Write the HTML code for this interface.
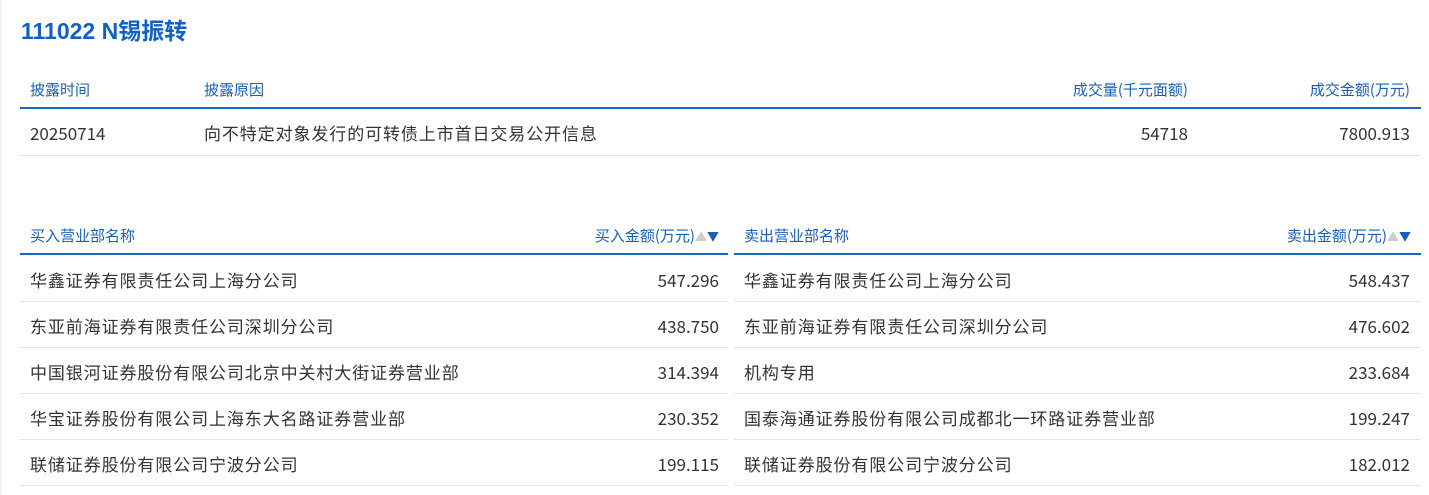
<!DOCTYPE html>
<html><head><meta charset="utf-8"><style>
*{margin:0;padding:0;box-sizing:border-box}
body{width:1429px;height:495px;background:#fff;font-family:"Liberation Sans","Noto Sans CJK SC",sans-serif;color:#333;position:relative;overflow:hidden;border-left:1px solid #eee}
.t{position:absolute;left:20px;top:17px;line-height:28px;font-size:23px;font-weight:bold;color:#1060c8;font-family:"Liberation Sans","Noto Sans CJK SC",sans-serif}
.h{position:absolute;font-size:15px;line-height:20px;color:#1a5fb4;white-space:nowrap;font-family:"Noto Sans CJK SC",sans-serif}
.c{position:absolute;font-size:17px;line-height:24px;white-space:nowrap;color:#333;font-family:"Noto Sans CJK SC",sans-serif}
.z{font-size:17px;letter-spacing:0.9px}
.bl{position:absolute;height:2px;background:#1466c8}
.gl{position:absolute;height:1px;background:#e4e4e4}
.ar{font-size:12px}
</style></head><body>
<div class="t">111022 N锡振转</div>
<div class="h" style="left:29px;top:80px">披露时间</div>
<div class="h" style="left:203px;top:80px">披露原因</div>
<div class="h" style="right:241px;top:80px">成交量(千元面额)</div>
<div class="h" style="right:19px;top:80px">成交金额(万元)</div>
<div class="bl" style="left:19px;width:1401px;top:107px"></div>
<div class="c" style="left:29px;top:121px">20250714</div>
<div class="c z" style="left:203px;top:121px">向不特定对象发行的可转债上市首日交易公开信息</div>
<div class="c" style="right:241px;top:121px">54718</div>
<div class="c" style="right:19px;top:121px">7800.913</div>
<div class="gl" style="left:19px;width:1401px;top:155px"></div>

<div class="h" style="left:29px;top:226px">买入营业部名称</div>
<div class="h" style="right:710px;top:226px">买入金额(万元)<span class="ar"><span style="color:#ccc">▲</span>▼</span></div>
<div class="h" style="left:743px;top:226px">卖出营业部名称</div>
<div class="h" style="right:18px;top:226px">卖出金额(万元)<span class="ar"><span style="color:#ccc">▲</span>▼</span></div>
<div class="bl" style="left:19px;width:708px;top:253px"></div>
<div class="bl" style="left:733px;width:687px;top:253px"></div>

<div class="c z" style="left:29px;top:268px">华鑫证券有限责任公司上海分公司</div><div class="c" style="right:710px;top:268px">547.296</div>
<div class="c z" style="left:743px;top:268px">华鑫证券有限责任公司上海分公司</div><div class="c" style="right:19px;top:268px">548.437</div>
<div class="c z" style="left:29px;top:314px">东亚前海证券有限责任公司深圳分公司</div><div class="c" style="right:710px;top:314px">438.750</div>
<div class="c z" style="left:743px;top:314px">东亚前海证券有限责任公司深圳分公司</div><div class="c" style="right:19px;top:314px">476.602</div>
<div class="c z" style="left:29px;top:360px">中国银河证券股份有限公司北京中关村大街证券营业部</div><div class="c" style="right:710px;top:360px">314.394</div>
<div class="c z" style="left:743px;top:360px">机构专用</div><div class="c" style="right:19px;top:360px">233.684</div>
<div class="c z" style="left:29px;top:406px">华宝证券股份有限公司上海东大名路证券营业部</div><div class="c" style="right:710px;top:406px">230.352</div>
<div class="c z" style="left:743px;top:406px">国泰海通证券股份有限公司成都北一环路证券营业部</div><div class="c" style="right:19px;top:406px">199.247</div>
<div class="c z" style="left:29px;top:452px">联储证券股份有限公司宁波分公司</div><div class="c" style="right:710px;top:452px">199.115</div>
<div class="c z" style="left:743px;top:452px">联储证券股份有限公司宁波分公司</div><div class="c" style="right:19px;top:452px">182.012</div>

<div class="gl" style="left:19px;width:708px;top:301px"></div><div class="gl" style="left:733px;width:687px;top:301px"></div>
<div class="gl" style="left:19px;width:708px;top:347px"></div><div class="gl" style="left:733px;width:687px;top:347px"></div>
<div class="gl" style="left:19px;width:708px;top:393px"></div><div class="gl" style="left:733px;width:687px;top:393px"></div>
<div class="gl" style="left:19px;width:708px;top:439px"></div><div class="gl" style="left:733px;width:687px;top:439px"></div>
<div class="gl" style="left:19px;width:708px;top:485px"></div><div class="gl" style="left:733px;width:687px;top:485px"></div>
</body></html>
